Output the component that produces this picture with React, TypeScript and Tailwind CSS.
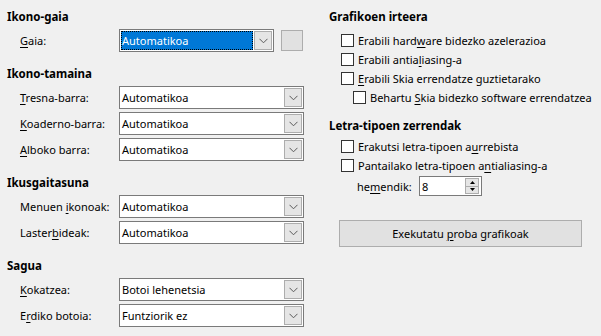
import React from "react";

const U = ({ children }: { children: React.ReactNode }) => (
  <span className="underline underline-offset-[2px] decoration-[1px]">{children}</span>
);

const Chevron = () => (
  <svg width="9" height="6" viewBox="0 0 9 6" className="block">
    <path d="M0.5 0.8 L4.5 4.8 L8.5 0.8" fill="none" stroke="#5a5a5a" strokeWidth="1" />
  </svg>
);

const Combo = ({ value, width = "w-[185px]", focused = false }: { value: string; width?: string; focused?: boolean }) => (
  <div className={`${width} h-[23px] flex border border-[#7a7a7a] bg-white`}>
    <div className="flex-1 flex items-center pl-px pr-px py-px min-w-0">
      {focused ? (
        <div className="h-full w-full bg-[#0078d7] text-white flex items-center pl-[1px] outline-1 outline-dotted outline-black -outline-offset-1">
          {value}
        </div>
      ) : (
        <div className="pl-[1px]">{value}</div>
      )}
    </div>
    <div className="w-[18px] my-px mr-px bg-[#e5e5e5] border border-[#adadad] flex items-center justify-center">
      <Chevron />
    </div>
  </div>
);

const Row = ({ label, children }: { label: React.ReactNode; children: React.ReactNode }) => (
  <div className="flex items-center h-[23px]">
    <div className="w-[119px] pl-[20px] shrink-0 whitespace-nowrap">{label}</div>
    {children}
  </div>
);

const Heading = ({ children, className = "" }: { children: React.ReactNode; className?: string }) => (
  <div className={`h-[16px] flex items-center font-bold text-[11.5px] ${className}`}>{children}</div>
);

const Check = ({ children, indent = false }: { children: React.ReactNode; indent?: boolean }) => (
  <div className={`h-[19px] flex items-center ${indent ? "pl-[24px]" : "pl-[12px]"}`}>
    <div className="w-[13px] h-[13px] border border-[#333333] bg-white shrink-0" />
    <div className="ml-[4px] whitespace-nowrap">{children}</div>
  </div>
);

export default function App() {
  return (
    <div
      className="w-[601px] h-[336px] bg-[#f0f0f0] text-black text-[11px] leading-none flex overflow-hidden"
      style={{ fontFamily: '"Noto Sans", "Open Sans", sans-serif' }}
    >
      {/* Left column */}
      <div className="w-[329px] pl-[7px] pt-[9px] flex flex-col shrink-0">
        <Heading>Ikono-gaia</Heading>
        <div className="mt-[4px] flex items-center h-[23px]">
          <div className="w-[112px] pl-[13px] shrink-0">
            <U>G</U>aia:
          </div>
          <Combo value="Automatikoa" width="w-[155px]" focused />
          <div className="ml-[7px] w-[22px] h-[21px] bg-[#e1e1e1] border border-[#adadad]" />
        </div>

        <Heading className="mt-[14px]">Ikono-tamaina</Heading>
        <div className="mt-[4px] flex flex-col gap-[3px] -ml-[7px]">
          <Row label={<><U>T</U>resna-barra:</>}>
            <Combo value="Automatikoa" />
          </Row>
          <Row label={<><U>K</U>oaderno-barra:</>}>
            <Combo value="Automatikoa" />
          </Row>
          <Row label={<><U>A</U>lboko barra:</>}>
            <Combo value="Automatikoa" />
          </Row>
        </div>

        <Heading className="mt-[14px]">Ikusgaitasuna</Heading>
        <div className="mt-[4px] flex flex-col gap-[3px] -ml-[7px]">
          <Row label={<>Menuen <U>i</U>konoak:</>}>
            <Combo value="Automatikoa" />
          </Row>
          <Row label={<>Laster<U>b</U>ideak:</>}>
            <Combo value="Automatikoa" />
          </Row>
        </div>

        <Heading className="mt-[14px]">Sagua</Heading>
        <div className="mt-[4px] flex flex-col gap-[3px] -ml-[7px]">
          <Row label={<><U>K</U>okatzea:</>}>
            <Combo value="Botoi lehenetsia" />
          </Row>
          <Row label={<>E<U>r</U>diko botoia:</>}>
            <Combo value="Funtziorik ez" />
          </Row>
        </div>
      </div>

      {/* Right column */}
      <div className="flex-1 pt-[9px] flex flex-col">
        <Heading>Grafikoen irteera</Heading>
        <div className="mt-[6px] flex flex-col">
          <Check>Erabili hard<U>w</U>are bidezko azelerazioa</Check>
          <Check>Erabili antia<U>l</U>iasing-a</Check>
          <Check><U>E</U>rabili Skia errendatze guztietarako</Check>
          <Check indent>Behartu <U>S</U>kia bidezko software errendatzea</Check>
        </div>

        <Heading className="mt-[11px]">Letra-tipoen zerrendak</Heading>
        <div className="mt-[3px] flex flex-col">
          <Check>Erakutsi letra-tipoen a<U>u</U>rrebista</Check>
          <Check>Pantailako letra-tipoen a<U>n</U>tialiasing-a</Check>
        </div>
        <div className="mt-[1px] h-[20px] flex items-center pl-[28px]">
          <div className="w-[62px]">he<U>m</U>endik:</div>
          <div className="w-[63px] h-[20px] border border-[#7a7a7a] bg-white flex items-center">
            <div className="flex-1 pl-[2px]">8</div>
            <div className="w-[14px] h-[16px] mr-[2px] flex flex-col border border-[#adadad] bg-[#e5e5e5]">
              <div className="flex-1 flex items-center justify-center border-b border-[#adadad]">
                <svg width="5" height="3" viewBox="0 0 5 3"><path d="M2.5 0 L5 3 L0 3 Z" fill="#000" /></svg>
              </div>
              <div className="flex-1 flex items-center justify-center">
                <svg width="5" height="3" viewBox="0 0 5 3"><path d="M0 0 L5 0 L2.5 3 Z" fill="#000" /></svg>
              </div>
            </div>
          </div>
        </div>
        <div className="mt-[24px] ml-[10px] w-[243px] h-[27px] bg-[#e1e1e1] border border-[#adadad] flex items-center justify-center">
          Exekutatu <span className="ml-[3px]"><U>p</U>roba grafikoak</span>
        </div>
      </div>
    </div>
  );
}
